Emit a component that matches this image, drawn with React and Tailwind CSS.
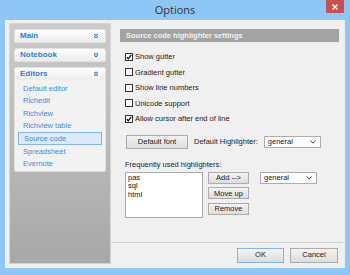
import React from 'react';

const font = { fontFamily: '"Liberation Sans", Arial, sans-serif' };

function Chevrons({ up }) {
  return (
    <span className="w-[8px] h-[8px] rounded-full bg-white flex items-center justify-center">
      <svg width="6" height="6" viewBox="0 0 6 6" className={up ? 'rotate-180' : ''}>
        <path d="M1 0.8 L3 2.6 L5 0.8 M1 3.2 L3 5 L5 3.2" fill="none" stroke="#2a7fe0" strokeWidth="1.1" />
      </svg>
    </span>
  );
}

function PanelHeader({ label, up }) {
  return (
    <div className="h-[12px] flex items-center justify-between pl-[5px] pr-[5px] bg-gradient-to-b from-white to-[#ececec] rounded-t-[2px]">
      <span className="text-[8px] font-bold text-[#2a7fe0]">{label}</span>
      <Chevrons up={up} />
    </div>
  );
}

function Check({ checked, label }) {
  return (
    <div className="h-[15.5px] flex items-center gap-[2px]">
      <span className="w-[8px] h-[8px] border border-[#333] bg-white flex items-center justify-center">
        {checked && (
          <svg width="6" height="6" viewBox="0 0 6 6">
            <path d="M0.8 3.2 L2.3 4.8 L5.3 0.8" fill="none" stroke="#111" strokeWidth="1.3" />
          </svg>
        )}
      </span>
      <span className="text-[7.5px] text-[#222]">{label}</span>
    </div>
  );
}

function Btn({ children, className = '' }) {
  return (
    <div className={`flex items-center justify-center border border-[#acacac] bg-gradient-to-b from-[#f3f3f3] to-[#dddddd] text-[7.5px] text-[#222] ${className}`}>
      {children}
    </div>
  );
}

function Select({ className = '' }) {
  return (
    <div className={`flex items-center justify-between border border-[#abadb3] bg-white pl-[3px] pr-[4px] text-[7.5px] text-[#222] ${className}`}>
      <span>general</span>
      <svg width="6" height="4" viewBox="0 0 6 4">
        <path d="M0.5 0.5 L3 3.2 L5.5 0.5" fill="none" stroke="#444" strokeWidth="1" />
      </svg>
    </div>
  );
}

export default function App() {
  const items = ['Default editor', 'Richedit', 'Richview', 'Richview table', 'Source code', 'Spreadsheet', 'Evernote'];
  return (
    <div className="w-[350px] h-[275px] bg-[#8ec6f5] flex flex-col overflow-hidden" style={font}>
      {/* title bar */}
      <div className="h-[20px] relative flex items-center justify-center">
        <span className="text-[11px] text-[#333] pt-[1px]" style={{ fontFamily: '"Open Sans", sans-serif' }}>Options</span>
        <div className="absolute right-[6px] top-0 w-[18px] h-[13px] bg-[#c75050] flex items-center justify-center">
          <svg width="6" height="6" viewBox="0 0 6 6">
            <path d="M0.5 0.5 L5.5 5.5 M5.5 0.5 L0.5 5.5" stroke="white" strokeWidth="1.4" />
          </svg>
        </div>
      </div>

      {/* body */}
      <div className="mx-[5px] h-[248px] bg-[#f0f0f0] flex">
        {/* sidebar */}
        <div className="ml-[4px] mt-[3px] mb-[4px] w-[102px] border border-[#d4d4d4] bg-gradient-to-b from-[#cbcbcb] to-[#a8a8a8] px-[4px] pt-[5px] flex flex-col gap-[5px]">
          <div className="rounded-[2px] border border-[#e2e2e2]">
            <PanelHeader label="Main" />
          </div>
          <div className="rounded-[2px] border border-[#e2e2e2]">
            <PanelHeader label="Notebook" />
          </div>
          <div className="rounded-[2px] border border-[#e2e2e2] bg-[#f2f2f2]">
            <PanelHeader label="Editors" up />
            <div className="pt-[2px] pb-[1px] px-[3px] flex flex-col">
              {items.map((it) => (
                <div
                  key={it}
                  className={`h-[12.6px] flex items-center pl-[5px] text-[7.5px] text-[#3d8be6] ${it === 'Source code' ? 'bg-[#dcebfc] border border-[#84b5ec]' : ''}`}
                >
                  {it}
                </div>
              ))}
            </div>
          </div>
        </div>

        {/* content */}
        <div className="flex-1 flex flex-col pt-[9px] pr-[2px]">
          <div className="ml-[9px] mr-[4px] h-[13px] bg-[#a3a3a3] flex items-center pl-[6px]">
            <span className="text-[7.5px] font-bold text-[#f2f2f2]">Source code highlighter settings</span>
          </div>

          <div className="ml-[14px] mt-[7px] flex flex-col">
            <Check checked label="Show gutter" />
            <Check label="Gradient gutter" />
            <Check label="Show line numbers" />
            <Check label="Unicode support" />
            <Check checked label="Allow cursor after end of line" />
          </div>

          <div className="ml-[15px] mt-[8px] flex items-center">
            <Btn className="w-[62px] h-[14px]">Default font</Btn>
            <span className="ml-[6px] text-[7.5px] text-[#222]">Default Highlighter:</span>
            <Select className="ml-[6px] w-[57px] h-[12px]" />
          </div>

          <div className="ml-[14px] mt-[10px] text-[7.5px] text-[#222]">Frequently used highlighters:</div>

          <div className="ml-[14px] mt-[2px] flex items-start">
            <div className="w-[78px] h-[46px] border border-[#abadb3] bg-white pl-[2px] pt-[1px] text-[7.5px] leading-[8.5px] text-[#111]">
              <div>pas</div>
              <div>sql</div>
              <div>html</div>
            </div>
            <div className="ml-[5px] flex flex-col gap-[3.5px]">
              <Btn className="w-[41px] h-[12px]">Add --&gt;</Btn>
              <Btn className="w-[41px] h-[12px]">Move up</Btn>
              <Btn className="w-[41px] h-[12px]">Remove</Btn>
            </div>
            <Select className="ml-[11px] w-[57px] h-[12px]" />
          </div>

          <div className="mt-auto border-t border-[#d0d0d0] h-[25px] flex items-center justify-end gap-[6px] pr-[5px] mb-[1px]">
            <Btn className="w-[47px] h-[15px] !border-[#7eb4ea]">OK</Btn>
            <Btn className="w-[48px] h-[15px]">Cancel</Btn>
          </div>
        </div>
      </div>
    </div>
  );
}
